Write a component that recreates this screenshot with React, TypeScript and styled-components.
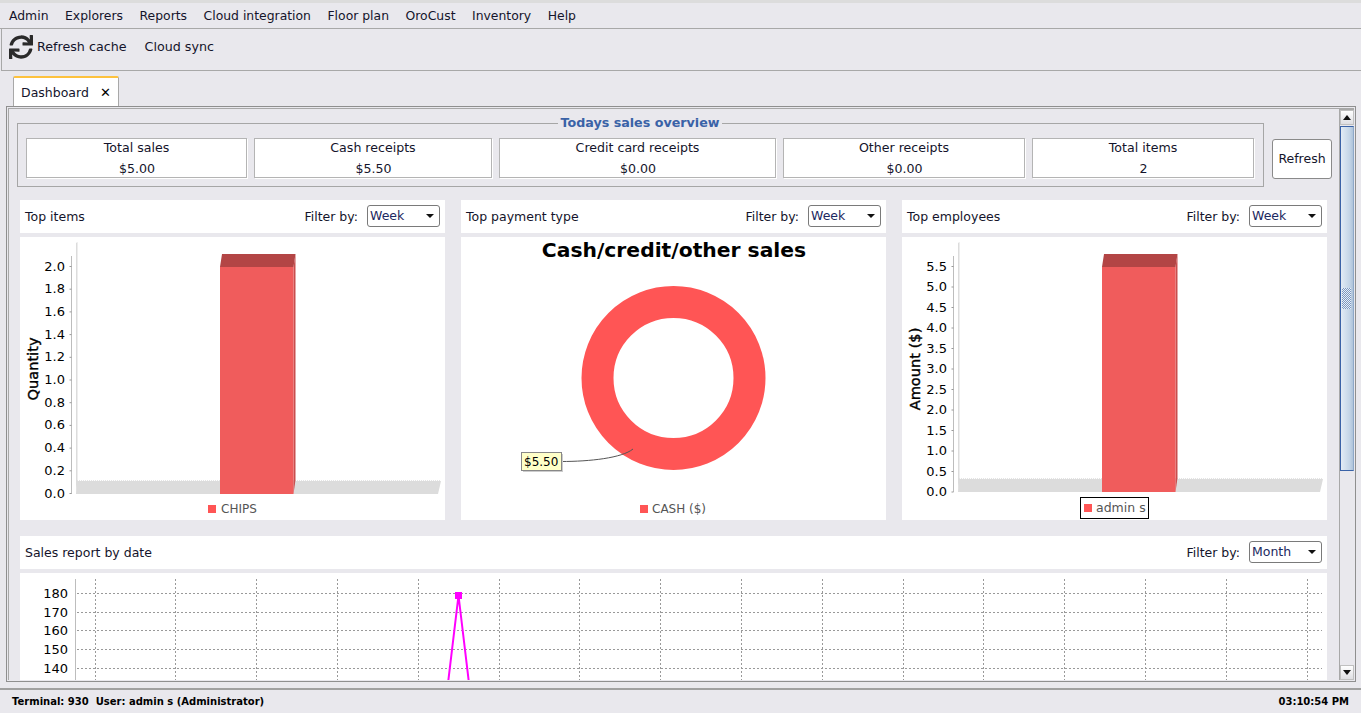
import React from "react";
import styled, { createGlobalStyle } from "styled-components";
import { FaSync } from "react-icons/fa";

const Global = createGlobalStyle`
  html, body { margin: 0; padding: 0; height: 100%; overflow: hidden; }
  body { font-family: "DejaVu Sans", sans-serif; font-size: 13px; color: #14142b; background: #e9e8ed; }
  * { box-sizing: border-box; }
`;

const Page = styled.div`
  height: 713px; display: flex; flex-direction: column; background: #e9e8ed;
`;
const TopStrip = styled.div`height: 3px; background: #dcdcdc;`;
const MenuBar = styled.nav`
  height: 26px; display: flex; align-items: center; padding-left: 9px; gap: 16.5px;
  border-bottom: 1px solid #a8a8a8;
`;
const MenuItem = styled.span`font-size: 12.4px; line-height: 25px;`;
const Toolbar = styled.div`
  height: 42px; margin-left: 1px; display: flex; align-items: center; padding: 0 0 6px 7px;
  border-left: 1px solid #a8a8a8; border-bottom: 1px solid #a8a8a8;
`;
const ToolButton = styled.span`
  display: flex; align-items: center; gap: 4px; font-size: 12.7px; margin-right: 18px;
  svg { color: #2a2a2a; }
`;
const TabStrip = styled.div`
  height: 35px; display: flex; align-items: flex-end; padding-left: 13px; position: relative; z-index: 1;
`;
const Tab = styled.div`
  width: 106px; height: 30px; background: #fff; border-top: 2px solid #fdc23e;
  border-left: 1px solid #a8a8a8; border-right: 1px solid #a8a8a8; border-radius: 2px 2px 0 0;
  display: flex; align-items: center; padding: 0 7px; justify-content: space-between; font-size: 12.5px;
`;
const Close = styled.span`font-size: 13px; color: #000; line-height: 1;`;
const Frame = styled.div`
  height: 576px; margin: 0 5px 0 6px; border: 1px solid #8f8f8f; padding: 1px;
  display: flex; background: #e9e8ed;
`;
const FrameInner = styled.div`
  flex: 1; min-width: 0; display: flex; border: 1px solid #a8a8a8; border-right: 0; border-bottom: 0;
`;
const Viewport = styled.div`
  flex: 1; min-width: 0; overflow: hidden; padding: 6px 0 0 8px;
`;
const SummaryRow = styled.div`display: flex; align-items: center; gap: 8px;`;
const Overview = styled.fieldset`
  width: 1247px; height: 72px; margin: 0; padding: 7px 9px 0 8px; border: 1px solid #a6a6a6; min-width: 0;
  display: flex; gap: 7px; align-items: flex-start;
`;
const OverviewTitle = styled.legend`
  margin: 0 auto; padding: 0 2px; font-size: 12.7px; font-weight: bold; color: #3a62a7; line-height: 16px;
`;
const Stat = styled.div<{ $w: number }>`
  width: ${p => p.$w}px; flex: none; height: 40px; background: #fff; border: 1px solid #b4b4b4;
  box-shadow: 1px 1px 0 #fff; display: flex; flex-direction: column; align-items: center; font-size: 12.6px;
`;
const StatLabel = styled.div`line-height: 16px; margin-top: 1px;`;
const StatValue = styled.div`line-height: 16px; margin-top: 5px; padding-left: 1px;`;
const RefreshButton = styled.button`
  width: 60px; height: 40px; background: #fff; border: 1px solid #8a8a8a; border-radius: 3px; padding: 0;
  font: 12.5px "DejaVu Sans", sans-serif; color: #14142b; margin-top: 15px;
`;
const ChartGrid = styled.div`
  display: grid; grid-template-columns: repeat(3, 425px); gap: 16px; margin: 13px 0 0 3px;
`;
const Column = styled.section`display: flex; flex-direction: column; gap: 4px;`;
const FullColumn = styled(Column)`width: 1307px; margin: 16px 0 0 3px;`;
const Header = styled.header`
  height: 33px; background: #fff; display: flex; align-items: center; padding: 0 5px; font-size: 12.5px;
`;
const HeaderTitle = styled.span`flex: 1;`;
const FilterLabel = styled.span`margin-right: 9px;`;
const Select = styled.div`
  width: 73px; height: 22px; background: #fff; border: 1px solid #7a7a7a; border-radius: 3px;
  display: flex; align-items: center; justify-content: space-between; padding: 0 5px 0 2px;
  color: #1c2860; font-size: 12.5px; margin-top: -2px;
`;
const Caret = styled.span`
  width: 0; height: 0; border-left: 4px solid transparent; border-right: 4px solid transparent; border-top: 4px solid #111;
`;
const ChartBody = styled.div`
  background: #fff; height: 283px; svg { display: block; }
`;
const LineBody = styled(ChartBody)`height: 300px;`;
const Scrollbar = styled.aside`
  width: 15px; flex: none; display: flex; flex-direction: column; border-left: 1px solid #a8a8a8; background: #e9e8ed;
  border-top: 1px solid #a8a8a8;
`;
const ArrowButton = styled.div`
  height: 15px; flex: none; background: linear-gradient(#fff, #dedee2); display: flex; align-items: center; justify-content: center;
  border: 1px solid #c0c0c0;
`;
const UpTri = styled(Caret)`border-top: 0; border-bottom: 5px solid #111;`;
const DownTri = styled(Caret)`border-top: 5px solid #111;`;
const Thumb = styled.div`
  height: 345px; flex: none; margin-top: 1px; border: 1px solid #3a62a7; border-right-color: #8ea8c8;
  background: linear-gradient(90deg, #e2ebf5, #c4d5e7 70%, #aec3da);
  display: flex; align-items: center; justify-content: center; padding-right: 2px;
`;
const Grip = styled.div`
  width: 9px; height: 21px;
  background: repeating-conic-gradient(#7c97c0 0 25%, #e8eff7 0 50%) 0 0 / 2px 2px;
`;
const Track = styled.div`flex: 1;`;
const StatusBar = styled.footer`
  flex: 1; margin-top: 6px; border-top: 2px solid #a0a0a0; display: flex; align-items: center; justify-content: space-between;
  padding: 0 12px 0 12px; font-size: 10px; font-weight: bold; color: #000;
`;

const Tick = styled.text`font-size: 13px; fill: #000; font-family: "DejaVu Sans", sans-serif;`;
const AxisTitle = styled.text`font-size: 14.6px; fill: #000; stroke: #000; stroke-width: 0.4px; font-family: "DejaVu Sans", sans-serif;`;
const LegendText = styled.text<{ $size?: number }>`font-size: ${p => p.$size ?? 12}px; fill: #555; font-family: "DejaVu Sans", sans-serif;`;
const ChartTitle = styled.text`font-size: 20.3px; font-weight: bold; fill: #000; font-family: "DejaVu Sans", sans-serif;`;
const CalloutText = styled.text`font-size: 12px; fill: #000; font-family: "DejaVu Sans", sans-serif;`;

function Bar3D({ x, x2, top, bottom, floor }: { x: number; x2: number; top: number; bottom: number; floor: number }) {
  return (
    <g>
      <polygon points={`${x2},${top} ${x2 + 2},254 ${x2 + 2},${floor} ${x2},${bottom}`} fill="#c94e4e" />
      <polygon points={`${x},${top} ${x + 2},254 ${x2 + 2},254 ${x2},${top}`} fill="#b34545" />
      <rect x={x} y={top} width={x2 - x} height={bottom - top} fill="#f05c5c" />
    </g>
  );
}

function BarChart(props: {
  originX: number; axisX: number; labelX: number; ticks: string[]; first: number; step: number;
  floorY: number; barX: number; title: string; titleY: number; legend?: React.ReactNode; right: number;
}) {
  const { originX, axisX, labelX, ticks, first, step, floorY, barX, title, titleY, legend, right } = props;
  const wall = axisX + 4.5;
  return (
    <svg width="425" height="283" viewBox={`${originX} 237 425 283`}>
      <polygon points={`${wall},${floorY} ${wall + 1},${floorY - 13} ${right + 3},${floorY - 13} ${right},${floorY}`} fill="#dcdcdc" />
      <line x1={wall + 1} x2={right + 3} y1={floorY - 13.5} y2={floorY - 13.5} stroke="#e4e4e4" strokeDasharray="1 1" />
      <polygon points={`${wall},${floorY} ${wall},243 ${wall + 1.5},242 ${wall + 1.5},${floorY - 14}`} fill="#dcdcdc" />
      <line x1={axisX} x2={axisX} y1="256" y2={floorY} stroke="#bdbdbd" />
      {ticks.map((t, i) => {
        const y = first + step * i;
        return (
          <g key={t}>
            <line x1={axisX - 2} x2={axisX} y1={y} y2={y} stroke="#999" />
            <Tick x={labelX} y={y + 4} textAnchor="end">{t}</Tick>
          </g>
        );
      })}
      <AxisTitle transform={`translate(${originX + 17.5},${titleY}) rotate(-90)`} textAnchor="middle">{title}</AxisTitle>
      <Bar3D x={barX} x2={barX + 73.5} top={267} bottom={floorY} floor={floorY - 14} />
      {legend}
    </svg>
  );
}

const filters = ["Top items", "Top payment type", "Top employees"];
const stats = [
  ["Total sales", "$5.00", 221], ["Cash receipts", "$5.50", 238], ["Credit card receipts", "$0.00", 277],
  ["Other receipts", "$0.00", 242], ["Total items", "2", 222],
] as const;
const menus = ["Admin", "Explorers", "Reports", "Cloud integration", "Floor plan", "OroCust", "Inventory", "Help"];
const lineY = [593.5, 612.5, 630.5, 649.5, 668.5];
const lineLabels = ["180", "170", "160", "150", "140"];

function FilterHeader({ title, value }: { title: string; value: string }) {
  return (
    <Header>
      <HeaderTitle>{title}</HeaderTitle>
      <FilterLabel>Filter by:</FilterLabel>
      <Select>{value}<Caret /></Select>
    </Header>
  );
}

export default function App() {
  return (
    <Page>
      <Global />
      <TopStrip />
      <MenuBar>{menus.map(m => <MenuItem key={m}>{m}</MenuItem>)}</MenuBar>
      <Toolbar>
        <ToolButton><FaSync size={24} />Refresh cache</ToolButton>
        <ToolButton>Cloud sync</ToolButton>
      </Toolbar>
      <TabStrip><Tab>Dashboard<Close>✕</Close></Tab></TabStrip>
      <Frame>
        <FrameInner>
          <Viewport>
            <SummaryRow>
              <Overview>
                <OverviewTitle>Todays sales overview</OverviewTitle>
                {stats.map(([l, v, w]) => (
                  <Stat key={l} $w={w}><StatLabel>{l}</StatLabel><StatValue>{v}</StatValue></Stat>
                ))}
              </Overview>
              <RefreshButton>Refresh</RefreshButton>
            </SummaryRow>
            <ChartGrid>
              <Column>
                <FilterHeader title={filters[0]} value="Week" />
                <ChartBody>
                  <BarChart
                    originX={20} axisX={71.5} labelX={65} first={266.5} step={22.7} floorY={494} barX={220}
                    ticks={["2.0", "1.8", "1.6", "1.4", "1.2", "1.0", "0.8", "0.6", "0.4", "0.2", "0.0"]}
                    title="Quantity" titleY={369} right={438}
                    legend={<g><rect x="208" y="505" width="8" height="8" fill="#ff5555" /><LegendText x="221" y="513">CHIPS</LegendText></g>}
                  />
                </ChartBody>
              </Column>
              <Column>
                <FilterHeader title={filters[1]} value="Week" />
                <ChartBody>
                  <svg width="425" height="283" viewBox="461 237 425 283">
                    <ChartTitle x="674" y="257" textAnchor="middle">Cash/credit/other sales</ChartTitle>
                    <circle cx="673.5" cy="378" r="76" fill="none" stroke="#ff5555" strokeWidth="32" />
                    <path d="M561 461.5 C590 461.5 622 458 633 449" fill="none" stroke="#555" strokeWidth="1" />
                    <rect x="523" y="454" width="40" height="18" fill="#ccc" />
                    <rect x="521.5" y="452.5" width="40" height="18" fill="#ffffc8" stroke="#888" />
                    <CalloutText x="524" y="466">$5.50</CalloutText>
                    <rect x="640" y="505" width="8" height="8" fill="#ff5555" />
                    <LegendText x="652" y="513">CASH ($)</LegendText>
                  </svg>
                </ChartBody>
              </Column>
              <Column>
                <FilterHeader title={filters[2]} value="Week" />
                <ChartBody>
                  <BarChart
                    originX={902} axisX={953.5} labelX={947} first={266.5} step={20.5} floorY={492} barX={1102}
                    ticks={["5.5", "5.0", "4.5", "4.0", "3.5", "3.0", "2.5", "2.0", "1.5", "1.0", "0.5", "0.0"]}
                    title="Amount ($)" titleY={369} right={1320}
                    legend={<g>
                      <rect x="1080.5" y="497.5" width="68" height="21" fill="#fff" stroke="#000" />
                      <rect x="1084" y="504" width="8" height="8" fill="#ff5555" />
                      <LegendText x="1096" y="512" $size={12.5}>admin s</LegendText>
                    </g>}
                  />
                </ChartBody>
              </Column>
            </ChartGrid>
            <FullColumn>
              <FilterHeader title="Sales report by date" value="Month" />
              <LineBody>
                <svg width="1307" height="300" viewBox="20 573 1307 300">
                  <line x1="75.5" x2="75.5" y1="579" y2="873" stroke="#bdbdbd" />
                  {lineY.map((y, i) => (
                    <g key={y}>
                      <line x1="77" x2="1322" y1={y} y2={y} stroke="#999" strokeDasharray="2 2" />
                      <Tick x="68" y={y + 4} textAnchor="end">{lineLabels[i]}</Tick>
                    </g>
                  ))}
                  {Array.from({ length: 16 }, (_, i) => {
                    const x = Math.floor(95 + i * 80.8) + 0.5;
                    return <line key={i} x1={x} x2={x} y1="579" y2="873" stroke="#999" strokeDasharray="2 2" />;
                  })}
                  <polyline points="446,700 458.5,595.5 471,700" fill="none" stroke="#ff00ff" strokeWidth="2" />
                  <rect x="455" y="592" width="7" height="7" fill="#ff00ff" />
                </svg>
              </LineBody>
            </FullColumn>
          </Viewport>
          <Scrollbar>
            <ArrowButton><UpTri /></ArrowButton>
            <Thumb><Grip /></Thumb>
            <Track />
            <ArrowButton><DownTri /></ArrowButton>
          </Scrollbar>
        </FrameInner>
      </Frame>
      <StatusBar>
        <span>Terminal: 930&nbsp; User: admin s (Administrator)</span>
        <span>03:10:54 PM</span>
      </StatusBar>
    </Page>
  );
}
